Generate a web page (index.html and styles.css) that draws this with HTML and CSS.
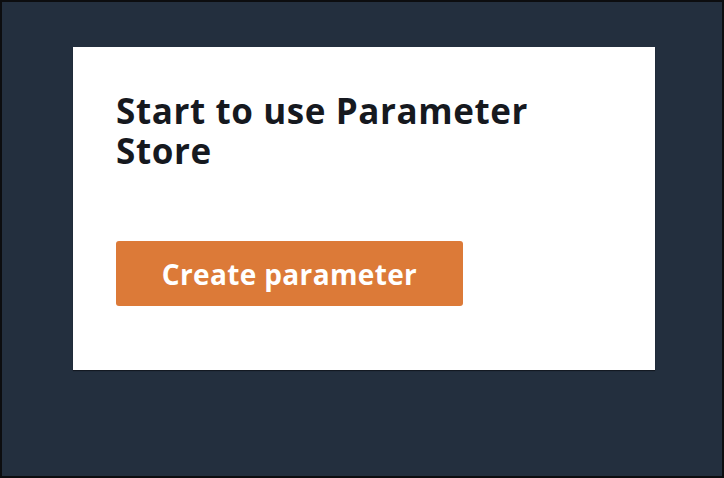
FILE: index.html
```html
<!DOCTYPE html>
<html lang="en">
<head>
<meta charset="utf-8">
<title>Parameter Store</title>
<link rel="stylesheet" href="styles.css">
</head>
<body>
<div class="frame">
  <section class="card">
    <h1 class="title">Start to use Parameter Store</h1>
    <button class="primary" type="button">Create parameter</button>
  </section>
</div>
</body>
</html>
```
FILE: styles.css
```css
html, body {
  margin: 0;
  padding: 0;
}
body {
  width: 724px;
  height: 478px;
  background: #232f3e;
  font-family: "Open Sans", "Liberation Sans", sans-serif;
}
.frame {
  box-sizing: border-box;
  width: 724px;
  height: 478px;
  border: 2px solid #0c0d0f;
  padding: 45px 0 0 71px;
}
.card {
  box-sizing: border-box;
  width: 582px;
  height: 323px;
  background: #ffffff;
  box-shadow: 0 1px 1px rgba(0, 0, 0, 0.45);
  padding: 44px 43px 0 43px;
}
.title {
  margin: 0;
  max-width: 460px;
  font-size: 35px;
  line-height: 40px;
  letter-spacing: 0.6px;
  font-weight: 700;
  color: #16191f;
}
.primary {
  display: flex;
  align-items: center;
  justify-content: center;
  margin-top: 70px;
  width: 347px;
  height: 65px;
  border: none;
  border-radius: 3px;
  background: #dc7a38;
  color: #ffffff;
  font-family: "Open Sans", "Liberation Sans", sans-serif;
  font-size: 28px;
  letter-spacing: 0.35px;
  font-weight: 700;
  padding: 0;
}
```
